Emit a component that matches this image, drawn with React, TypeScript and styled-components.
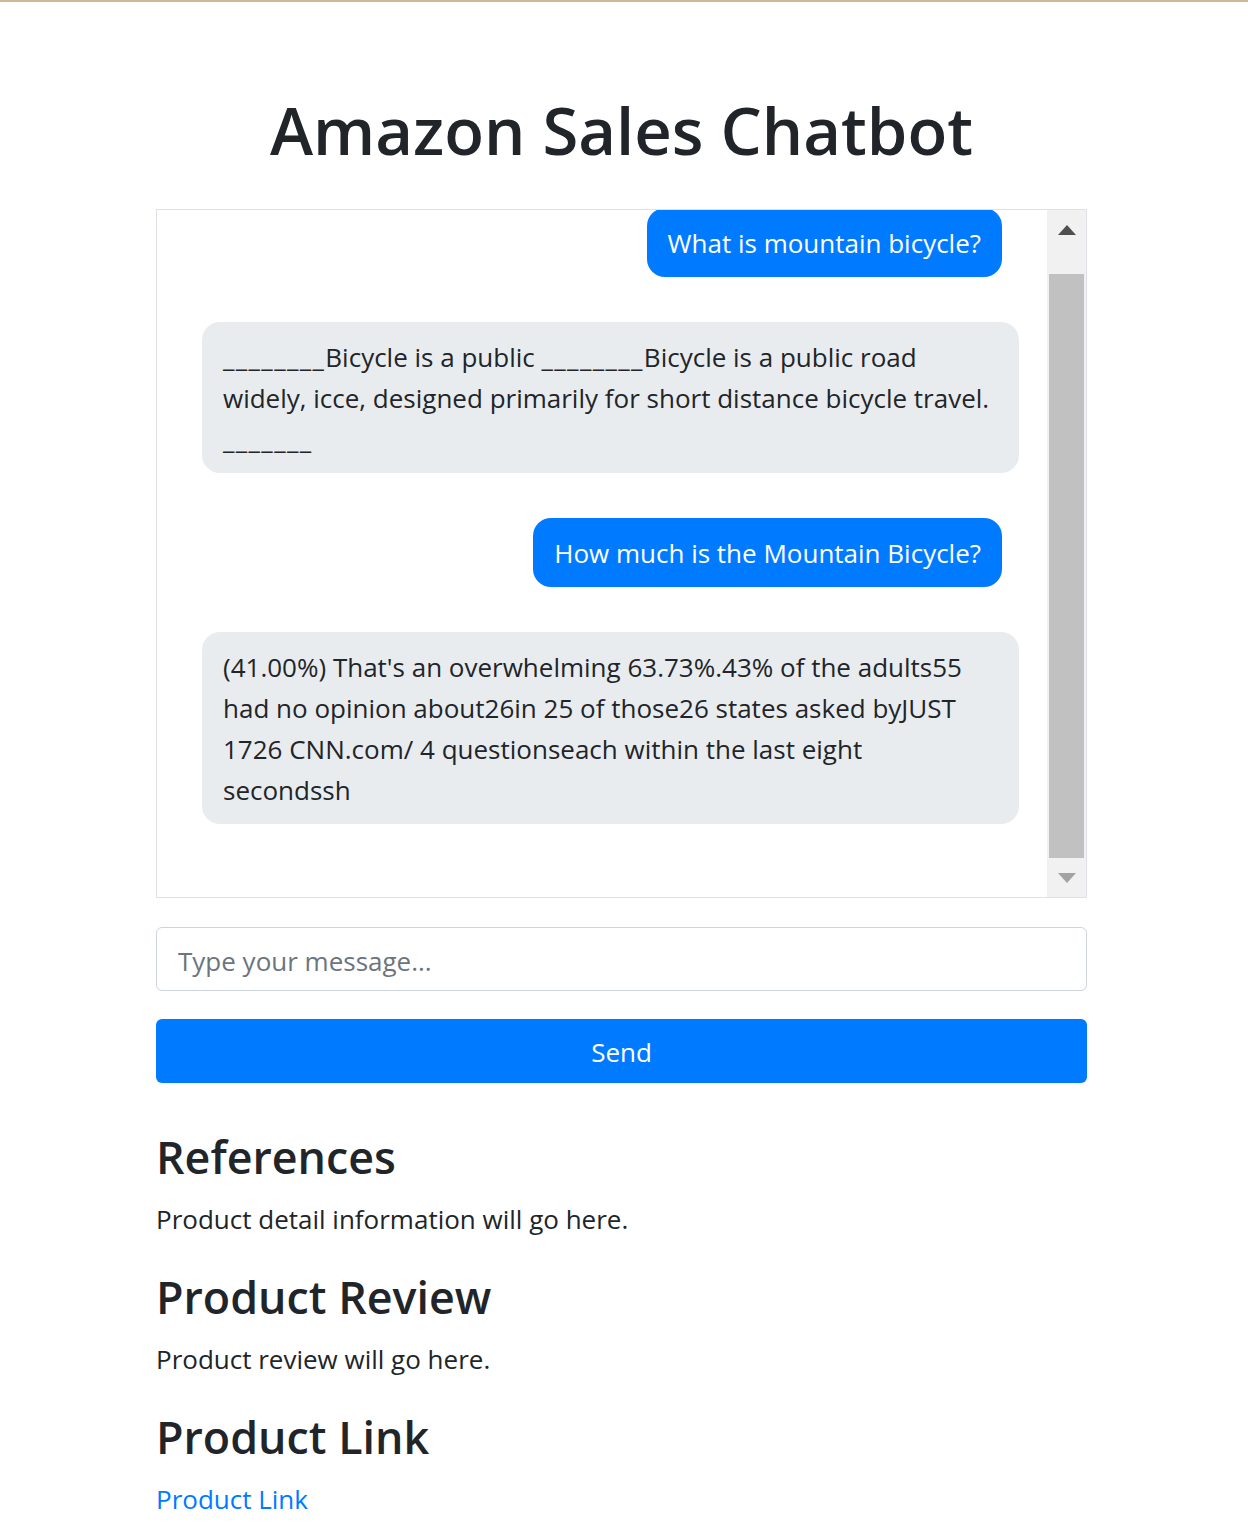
import React from "react";
import styled, { createGlobalStyle } from "styled-components";

const GlobalStyle = createGlobalStyle`
  html, body {
    margin: 0;
    padding: 0;
    background: #ffffff;
  }
  body {
    font-family: "Open Sans", "Noto Sans", "Liberation Sans", sans-serif;
    color: #212529;
  }
  * { box-sizing: border-box; }
`;

const TopRule = styled.div`
  height: 2px;
  background: #cfb898;
`;

const Page = styled.div`
  display: flex;
  justify-content: center;
  padding-right: 5px;
`;

const Container = styled.main`
  width: 931px;
  display: flex;
  flex-direction: column;
`;

const Title = styled.h1`
  margin: 90px 0 41px;
  font-size: 65.2px;
  line-height: 76px;
  font-weight: 600;
  text-align: center;
  color: #212529;
`;

const ChatBox = styled.section`
  height: 689px;
  border: 1px solid #dee2e6;
  display: flex;
  overflow: hidden;
`;

const MessageList = styled.div`
  flex: 1;
  display: flex;
  flex-direction: column;
  gap: 45px;
  margin-top: -2px;
  padding: 0 28px 0 45px;
`;

const Bubble = styled.div<{ $mine?: boolean }>`
  font-size: 26px;
  line-height: 41px;
  border-radius: 18px;
  padding: 14.5px 21px 13.5px;
  ${(p) =>
    p.$mine
      ? `
    align-self: flex-end;
    margin-right: 17px;
    background: #007bff;
    color: #ffffff;
  `
      : `
    align-self: stretch;
    background: #e9ecef;
    color: #212529;
  `}
`;

const Blank = styled.span`
  letter-spacing: 1.4px;
`;

const ScrollTrack = styled.div`
  width: 39px;
  background: #f1f1f1;
  display: flex;
  flex-direction: column;
`;

const ScrollButton = styled.div`
  height: 39px;
  display: flex;
  align-items: center;
  justify-content: center;
`;

const ThumbArea = styled.div`
  flex: 1;
  display: flex;
  flex-direction: column;
  padding-top: 25px;
`;

const Thumb = styled.div`
  flex: 1;
  margin: 0 2px;
  background: #c1c1c1;
`;

const Composer = styled.form`
  display: flex;
  flex-direction: column;
  gap: 28px;
  margin-top: 29px;
`;

const MessageInput = styled.input`
  width: 100%;
  height: 64px;
  border: 1px solid #ced4da;
  border-radius: 6px;
  padding: 3px 21px 0;
  font-family: "Open Sans", "Noto Sans", sans-serif;
  font-size: 26px;
  color: #495057;
  outline: none;
  &::placeholder {
    color: #6c757d;
  }
`;

const SendButton = styled.button`
  width: 100%;
  height: 64px;
  border: none;
  border-radius: 6px;
  padding: 2px 0 0;
  background: #007bff;
  color: #ffffff;
  font-family: "Open Sans", "Noto Sans", sans-serif;
  font-size: 26px;
  cursor: pointer;
`;

const InfoSection = styled.section<{ $first?: boolean }>`
  margin-top: ${(p) => (p.$first ? "47px" : "30px")};
`;

const SectionHeading = styled.h3`
  margin: 0 0 16px;
  font-size: 44.8px;
  line-height: 53px;
  font-weight: 600;
  color: #212529;
`;

const Paragraph = styled.p`
  margin: 0;
  font-size: 26px;
  line-height: 41px;
`;

const Link = styled.a`
  color: #007bff;
  text-decoration: none;
`;

const Arrow = ({ up, color }: { up?: boolean; color: string }) => (
  <svg width="18" height="10" viewBox="0 0 18 10">
    {up ? (
      <polygon points="0,10 9,0 18,10" fill={color} />
    ) : (
      <polygon points="0,0 18,0 9,10" fill={color} />
    )}
  </svg>
);

export default function App() {
  return (
    <>
      <GlobalStyle />
      <TopRule />
      <Page>
        <Container>
          <Title>Amazon Sales Chatbot</Title>
          <ChatBox>
            <MessageList>
              <Bubble $mine>What is mountain bicycle?</Bubble>
              <Bubble>
                <Blank>________</Blank>Bicycle is a public <Blank>________</Blank>Bicycle is a public road
                <br />
                widely, icce, designed primarily for short distance bicycle travel.
                <br />
                <Blank>_______</Blank>
              </Bubble>
              <Bubble $mine>How much is the Mountain Bicycle?</Bubble>
              <Bubble>
                (41.00%) That's an overwhelming 63.73%.43% of the adults55
                <br />
                had no opinion about26in 25 of those26 states asked byJUST
                <br />
                1726 CNN.com/ 4 questionseach within the last eight
                <br />
                secondssh
              </Bubble>
            </MessageList>
            <ScrollTrack>
              <ScrollButton>
                <Arrow up color="#505050" />
              </ScrollButton>
              <ThumbArea>
                <Thumb />
              </ThumbArea>
              <ScrollButton>
                <Arrow color="#a3a3a3" />
              </ScrollButton>
            </ScrollTrack>
          </ChatBox>
          <Composer onSubmit={(e) => e.preventDefault()}>
            <MessageInput type="text" placeholder="Type your message..." />
            <SendButton type="submit">Send</SendButton>
          </Composer>
          <InfoSection $first>
            <SectionHeading>References</SectionHeading>
            <Paragraph>Product detail information will go here.</Paragraph>
          </InfoSection>
          <InfoSection>
            <SectionHeading>Product Review</SectionHeading>
            <Paragraph>Product review will go here.</Paragraph>
          </InfoSection>
          <InfoSection>
            <SectionHeading>Product Link</SectionHeading>
            <Paragraph>
              <Link href="#">Product Link</Link>
            </Paragraph>
          </InfoSection>
        </Container>
      </Page>
    </>
  );
}
